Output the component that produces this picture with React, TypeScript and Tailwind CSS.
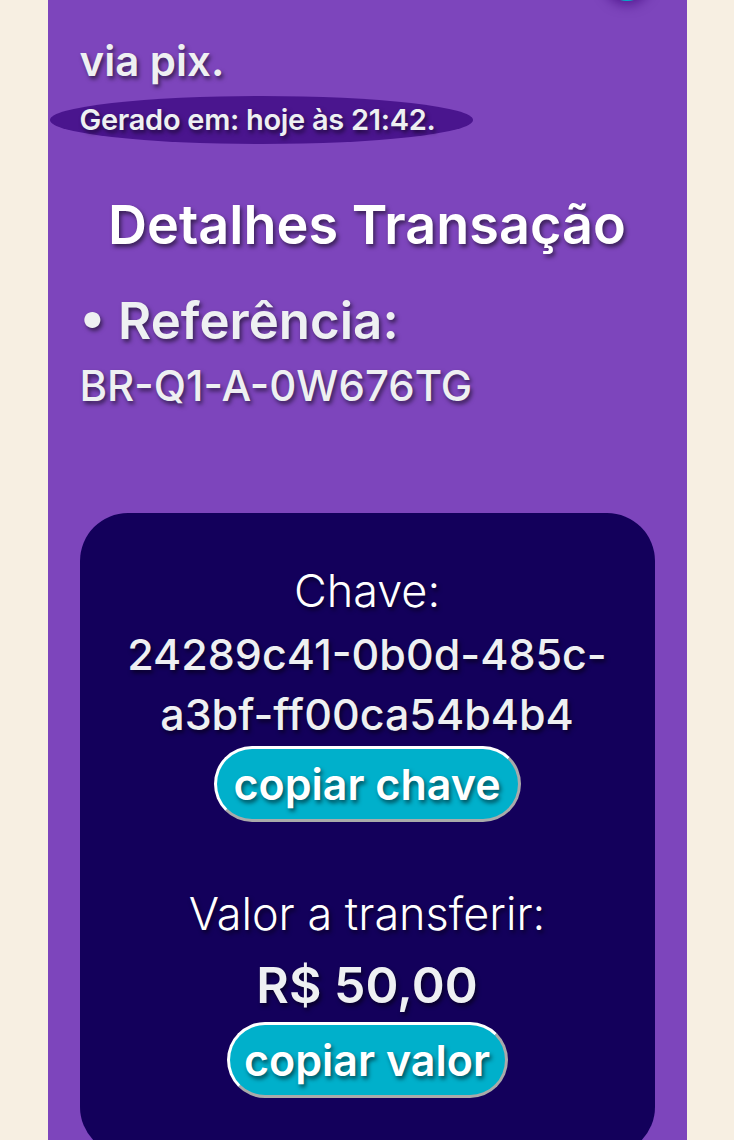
import React from "react";

const shadow = "[text-shadow:2px_3px_4px_rgba(0,0,0,0.55)]";

export default function App() {
  return (
    <div
      className="h-[1140px] overflow-hidden bg-[#f7efe2]"
      style={{ fontFamily: "Inter, 'Open Sans', sans-serif" }}
    >
      <div className="mx-auto flex w-[639px] flex-col bg-[#7d45bc] px-8 pb-16">
        <div className="-mt-[47px] flex h-12 justify-end">
          <div className="mr-[4px] h-12 w-12 rounded-full bg-[#00b0cb] shadow-[0_4px_12px_rgba(60,0,120,0.6)]" />
        </div>

        <div className={`mt-[34px] text-[42px] leading-[52px] font-semibold text-[#eef0f2] ${shadow}`}>
          via pix.
        </div>

        <div className="-ml-[30px] mt-[9px] flex h-[48px] w-[423px] items-center rounded-[50%] bg-[#4a158e] pl-[30px]">
          <span className={`text-[29px] font-semibold tracking-[-0.01em] text-[#eef0f2] ${shadow}`}>
            Gerado em: hoje às 21:42.
          </span>
        </div>

        <div className={`mt-[51px] text-center text-[54px] leading-[60px] font-semibold text-white ${shadow}`}>
          Detalhes Transação
        </div>

        <div className={`mt-[40px] text-[51px] leading-[52px] font-semibold text-[#eef0f2] ${shadow}`}>
          • Referência:
        </div>
        <div className={`mt-[19px] text-[42px] leading-[40px] font-medium text-[#eef0f2] ${shadow}`}>
          BR-Q1-A-0W676TG
        </div>

        <div className="mt-[107px] flex flex-col items-center rounded-[48px] bg-[#13005b] pt-[55px] pb-[57px] text-center">
          <div className={`text-[45px] leading-[46px] font-light text-white ${shadow}`}>Chave:</div>
          <div className={`mt-[10px] text-[43px] leading-[60px] font-medium text-[#eef0f2] ${shadow}`}>
            24289c41-0b0d-485c-
            <br />
            a3bf-ff00ca54b4b4
          </div>
          <button
            className={`mt-[2px] flex h-[76px] w-[307px] items-center justify-center rounded-full border-[3px] border-t-white border-l-white border-b-[#aaaaaa] border-r-[#aaaaaa] bg-[#00b0cb] text-[43px] font-semibold text-white ${shadow}`}
          >
            copiar chave
          </button>

          <div className={`mt-[69px] text-[45px] leading-[46px] font-light text-white ${shadow}`}>
            Valor a transferir:
          </div>
          <div className={`mt-[20px] text-[50px] leading-[56px] font-semibold text-[#eef0f2] ${shadow}`}>
            R$ 50,00
          </div>
          <button
            className={`mt-[9px] flex h-[76px] w-[281px] items-center justify-center rounded-full border-[3px] border-t-white border-l-white border-b-[#aaaaaa] border-r-[#aaaaaa] bg-[#00b0cb] text-[43px] font-semibold text-white ${shadow}`}
          >
            copiar valor
          </button>
        </div>
      </div>
    </div>
  );
}
